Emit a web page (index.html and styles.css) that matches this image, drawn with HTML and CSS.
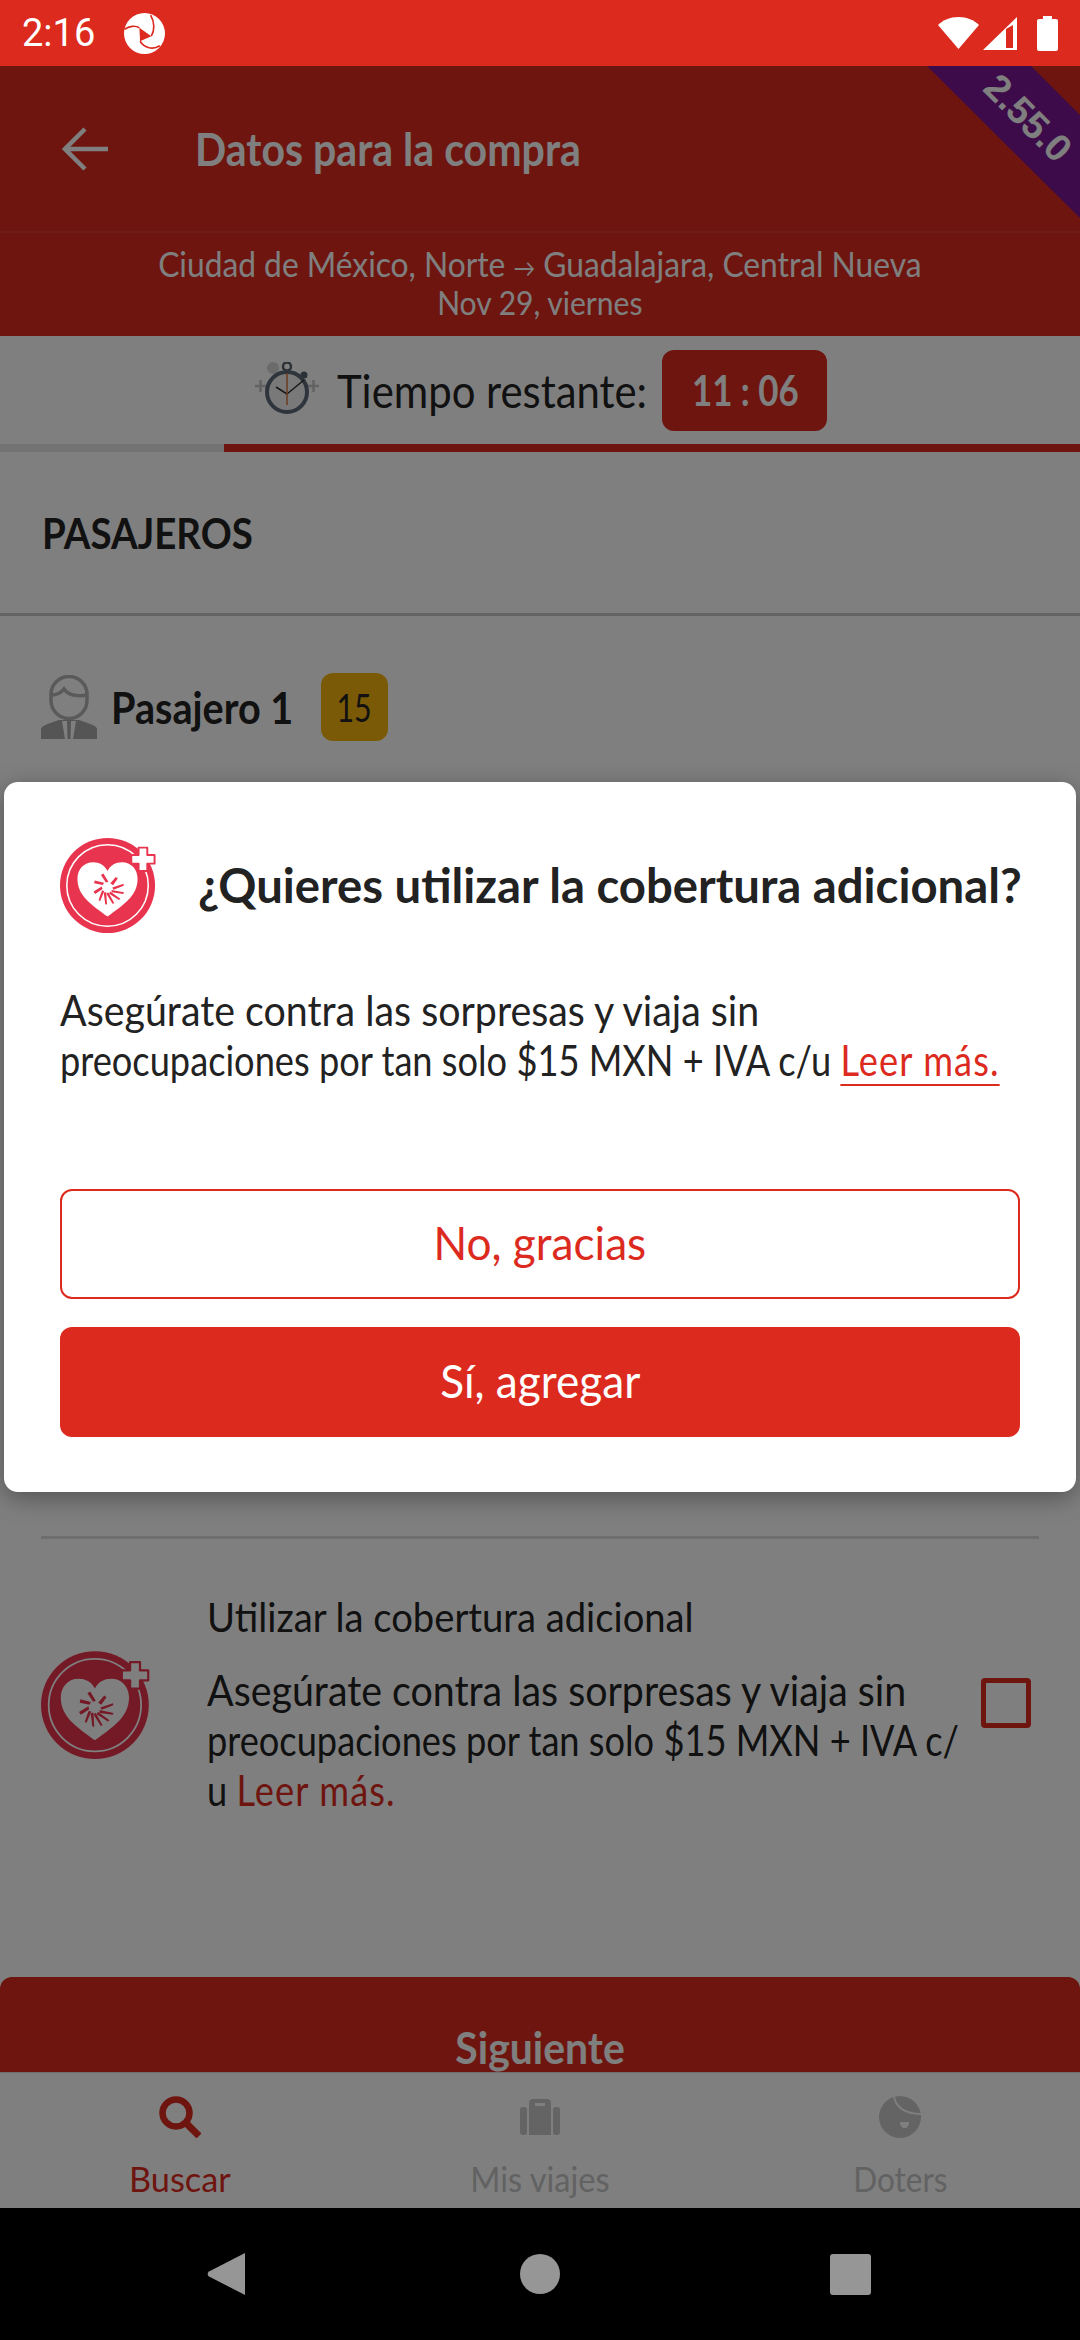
FILE: index.html
```html
<!DOCTYPE html>
<html lang="es">
<head>
<meta charset="utf-8">
<title>Datos para la compra</title>
<link rel="stylesheet" href="styles.css">
</head>
<body>
<div class="statusbar">
    <div class="status-left">
        <span class="clock">2:16</span>
        <svg width="41" height="41" viewBox="0 0 40 40">
            <circle cx="20" cy="20" r="20" fill="#fff"/>
            <path d="M15 14.4l11.6 8.2-10.9 5z" fill="#dc2a1e"/>
            <path d="M15 14.4C11 12 5 12.5 .5 16M26.600 22.600C30 17 30 9 26 2M15.700 27.600C19 33 27 37 35 32" fill="none" stroke="#dc2a1e" stroke-width="1.600"/>
        </svg>
    </div>
    <div class="status-right">
        <svg width="41" height="32" viewBox="0 0 41 32"><path d="M0 8C5 3 12 0 20.500 0S36 3 41 8L20.500 32z" fill="#fff"/></svg>
        <svg width="34" height="33" viewBox="0 0 34 33"><path d="M34 0v33H0zM23 12v19h7V8z" fill="#fff" fill-rule="evenodd"/></svg>
        <svg class="battery" width="21" height="35" viewBox="0 0 21 35"><path d="M6 0h9v3h4a2 2 0 0 1 2 2v28a2 2 0 0 1-2 2H2a2 2 0 0 1-2-2V5a2 2 0 0 1 2-2h4z" fill="#fff"/></svg>
    </div>
</div>

<div class="screen">
    <header class="appbar">
        <svg class="back" width="46" height="44" viewBox="0 0 46 44"><path d="M23 2L3 22l20 20M4 22h42" fill="none" stroke="#fff" stroke-width="4.500"/></svg>
        <h1>Datos para la compra</h1>
    </header>
    <div class="route">
        <p><span class="route-a">Ciudad de México, Norte <span class="arrow">→</span> Guadalajara, Central Nueva</span></p>
        <p><span class="route-b">Nov 29, viernes</span></p>
    </div>
    <div class="timer">
        <svg class="watch" width="64" height="56" viewBox="0 0 64 56">
            <path d="M0 24h11M5.500 18v12M53 24h11M58.500 18v12" stroke="#c4c4c4" stroke-width="2.500"/>
            <circle cx="18" cy="6" r="6" fill="#d6d6d6"/>
            <circle cx="32" cy="4.500" r="4" fill="none" stroke="#59636f" stroke-width="2.500"/>
            <circle cx="49" cy="13" r="3.500" fill="#59636f"/>
            <circle cx="32" cy="30" r="20" fill="#f2f2f2" stroke="#5f6b79" stroke-width="4"/>
            <path d="M32 32l-11-7M32 32l17-14" stroke="#333" stroke-width="1.500" fill="none"/>
            <path d="M32 11v32" stroke="#d9743c" stroke-width="1.500"/>
        </svg>
        <span class="timer-label">Tiempo restante:</span>
        <span class="timer-count"><span>11 : 06</span></span>
    </div>
    <div class="progress"><div class="progress-fill"></div></div>

    <section class="section-title"><span>PASAJEROS</span></section>

    <div class="passenger">
        <svg class="person" width="56" height="64" viewBox="0 0 56 64">
            <rect x="10" y="1.500" width="36" height="42" rx="18" fill="none" stroke="#b4b4b4" stroke-width="3.500"/>
            <path d="M10 20c6 0 10-2 13-6 4 6 13 8 23 6" fill="none" stroke="#b4b4b4" stroke-width="3.500"/>
            <path d="M0 64V54c0-3 6-5 18-9h20c12 4 18 6 18 9v10z" fill="#aaa"/>
            <path d="M21 46h5l.5 18H24zM35 46h-5l-.5 18H32z" fill="#fff"/>
        </svg>
        <span class="passenger-name">Pasajero 1</span>
        <span class="age"><span>15</span></span>
    </div>

    <div class="coverage">
        <svg class="shield shield-row" viewBox="0 0 100 100"><use href="#heart-logo"/></svg>
        <div class="coverage-text">
            <p class="coverage-title">Utilizar la cobertura adicional</p>
            <p class="line line-a">Asegúrate contra las sorpresas y viaja sin</p>
            <p class="line line-b">preocupaciones por tan solo $15 MXN + IVA c/</p>
            <p class="line line-c">u <span class="red">Leer más.</span></p>
        </div>
        <div class="checkbox"></div>
    </div>

    <div class="next"><span>Siguiente</span></div>

    <nav class="tabs">
        <div class="tab tab-active">
            <svg width="42" height="42" viewBox="0 0 42 42"><circle cx="17" cy="17" r="13.500" fill="none" stroke="#dc2a1e" stroke-width="6.500"/><path d="M26 26l14 14" stroke="#dc2a1e" stroke-width="7"/></svg>
            <span class="tab-label label-buscar">Buscar</span>
        </div>
        <div class="tab">
            <svg width="42" height="42" viewBox="0 0 42 42"><g fill="#c8c8c8"><rect x="1" y="11" width="7" height="28" rx="3"/><rect x="34" y="11" width="7" height="28" rx="3"/><path d="M10 39V7a4 4 0 0 1 4-4h14a4 4 0 0 1 4 4v32z"/></g><rect x="16" y="7" width="10" height="3" fill="#fff"/></svg>
            <span class="tab-label label-viajes">Mis viajes</span>
        </div>
        <div class="tab">
            <svg width="42" height="42" viewBox="0 0 42 42"><circle cx="21" cy="21" r="21" fill="#c8c8c8"/><path d="M15 0c1 10 10 18 27 18" fill="none" stroke="#fff" stroke-width="2"/><path d="M21 26h9c0 4-2 6-4.500 6S21 30 21 26z" fill="#fff"/></svg>
            <span class="tab-label label-doters">Doters</span>
        </div>
    </nav>

    <div class="ribbon"><span>2.55.0</span></div>
    <div class="scrim"></div>

    <div class="dialog">
        <div class="dialog-head">
            <svg class="shield" viewBox="0 0 100 100"><use href="#heart-logo"/></svg>
            <h2>¿Quieres utilizar la cobertura adicional?</h2>
        </div>
        <div class="dialog-body">
            <p class="line line-a">Asegúrate contra las sorpresas y viaja sin</p>
            <p class="line line-b">preocupaciones por tan solo $15 MXN + IVA c/u <a class="more">Leer más.</a></p>
        </div>
        <div class="btn btn-outline"><span>No, gracias</span></div>
        <div class="btn btn-solid"><span>Sí, agregar</span></div>
    </div>
</div>

<div class="navbar">
    <svg class="nav-back" width="38" height="44" viewBox="0 0 38 44"><path d="M38 1v42L2 24.500a3 3 0 0 1 0-5z" fill="#969696"/></svg>
    <svg class="nav-home" width="40" height="40" viewBox="0 0 40 40"><circle cx="20" cy="20" r="20" fill="#969696"/></svg>
    <svg class="nav-recent" width="41" height="41" viewBox="0 0 41 41"><rect width="41" height="41" rx="3" fill="#969696"/></svg>
</div>

<svg class="defs" width="0" height="0">
    <symbol id="heart-logo" viewBox="0 0 100 100">
        <circle cx="49" cy="51" r="49" fill="#e8344e"/>
        <circle cx="49" cy="51" r="42" fill="none" stroke="#fff" stroke-width="1.600"/>
        <path d="M49 83C33 71 18 62 18 44c0-10 7-17 16-17 7 0 12 3 15 9 3-6 8-9 15-9 9 0 16 7 16 17 0 18-15 27-31 39z" fill="#fff"/>
        <path d="M81 12h9v7.500h7.500v9H90V36h-9v-7.500h-7.500v-9H81z" fill="#fff" stroke="#e8344e" stroke-width="2" stroke-linejoin="round"/>
        <g fill="#e8344e" transform="translate(49 53) scale(.85)">
            <path d="M-2-6l-6-9 3-2 6 10z"/>
            <path d="M-2-6l-6-9 3-2 6 10z" transform="rotate(-45)"/>
            <path d="M-2-6l-6-9 3-2 6 10z" transform="rotate(-90)"/>
            <path d="M0-6l1-10 3 0 0 10z" transform="rotate(35)"/>
            <path d="M3-5l3-14 2 1-2 13z" transform="rotate(60)"/>
            <path d="M3-5l3-15 2 1-2 14z" transform="rotate(90)"/>
            <path d="M3-5l3-15 2 1-2 14z" transform="rotate(115)"/>
            <path d="M3-5l3-15 2 1-2 14z" transform="rotate(140)"/>
            <path d="M3-5l3-15 2 1-2 14z" transform="rotate(165)"/>
            <path d="M3-5l3-13 2 1-2 12z" transform="rotate(190)"/>
        </g>
    </symbol>
</svg>
</body>
</html>
```

FILE: styles.css
```css
html, body {
    margin: 0;
    padding: 0;
}

body {
    width: 1080px;
    height: 2340px;
    overflow: hidden;
    background: #fff;
    color: #222;
    font-family: Lato, "Liberation Sans", sans-serif;
    display: flex;
    flex-direction: column;
}

h1, h2, p {
    margin: 0;
    font-weight: normal;
}

svg {
    display: block;
    flex: none;
}

/* la letra original es mas estrecha que Lato: se comprime cada texto */
h1, h2, .route-a, .route-b, .timer-label, .timer-count span, .section-title span,
.passenger-name, .age span, .line, .coverage-title, .next span, .tab-label, .btn span {
    display: inline-block;
    white-space: nowrap;
    transform-origin: left center;
}

.statusbar {
    height: 66px;
    background: #dc2a1e;
    display: flex;
    justify-content: space-between;
    align-items: center;
    padding: 0 22px;
    box-sizing: border-box;
    flex: none;
}

.status-left, .status-right {
    display: flex;
    align-items: center;
}

.status-right {
    gap: 4px;
}

.battery {
    margin-left: 16px;
}

.clock {
    color: #fff;
    font: 38px Roboto, sans-serif;
    margin-right: 29px;
}

.screen {
    position: relative;
    height: 2142px;
    flex: none;
    display: flex;
    flex-direction: column;
    overflow: hidden;
}

.appbar {
    height: 165px;
    background: #dc2a1e;
    display: flex;
    align-items: center;
    padding-left: 62px;
    box-sizing: border-box;
    flex: none;
}

.back {
    margin-right: 87px;
}

.appbar h1 {
    color: #fff;
    font-size: 46px;
    font-weight: 700;
    transform: scaleX(.893);
}

.route {
    height: 105px;
    background: #dc2a1e;
    border-top: 2px solid #e33a2e;
    box-sizing: border-box;
    color: #fff;
    text-align: center;
    line-height: 39px;
    padding-top: 11px;
    flex: none;
}

.route p {
    height: 39px;
}

.route-a {
    font-size: 35px;
    transform-origin: center;
    transform: scaleX(.907);
}

.route-b {
    font-size: 33px;
    transform-origin: center;
    transform: scaleX(.91);
}

.arrow {
    font-size: 24px;
}

.timer {
    height: 108px;
    display: flex;
    align-items: center;
    justify-content: center;
    padding-left: 2px;
    flex: none;
}

.watch {
    margin-right: 18px;
}

.timer-label {
    font-size: 46px;
    margin-right: -15px;
    transform: scaleX(.91);
}

.timer-count {
    width: 165px;
    height: 81px;
    border-radius: 12px;
    background: #dc2a1e;
    color: #fff;
    font-size: 42px;
    font-weight: 700;
    display: flex;
    align-items: center;
    justify-content: center;
}

.timer-count span {
    transform-origin: center;
    transform: scaleX(.83);
}

.progress {
    height: 8px;
    background: #e6e6e6;
    flex: none;
}

.progress-fill {
    height: 8px;
    margin-left: 224px;
    background: #dc2a1e;
}

.section-title {
    height: 164px;
    padding-left: 42px;
    display: flex;
    align-items: center;
    font-size: 42px;
    font-weight: 700;
    border-bottom: 3px solid #c8c8c8;
    box-sizing: border-box;
    flex: none;
}

.section-title span {
    transform: scaleX(.915);
}

.passenger {
    height: 182px;
    display: flex;
    align-items: center;
    padding-left: 41px;
    flex: none;
}

.person {
    margin-right: 14px;
}

.passenger-name {
    font-size: 44px;
    font-weight: 700;
    margin-right: 7px;
    transform: scaleX(.9);
}

.age {
    width: 67px;
    height: 68px;
    border-radius: 12px;
    background: #f5b50e;
    font-size: 38px;
    display: flex;
    align-items: center;
    justify-content: center;
}

.age span {
    transform-origin: center;
    transform: scaleX(.8);
}

.coverage {
    margin: 738px 41px 0;
    padding-top: 56px;
    height: 441px;
    box-sizing: border-box;
    border-top: 3px solid #ddd;
    display: flex;
    align-items: flex-start;
    flex: none;
}

.shield {
    width: 97px;
    height: 97px;
    overflow: visible;
}

.shield-row {
    width: 110px;
    height: 110px;
    margin: 54px 56px 0 0;
}

.coverage-text {
    width: 762px;
    flex: none;
}

.coverage-title {
    display: block;
    font-size: 40px;
    line-height: 44px;
    margin-bottom: 26px;
    transform: scaleX(.955);
}

.line {
    display: block;
    font-size: 42px;
    line-height: 50px;
}

.line-a {
    transform: scaleX(.937);
}

.line-b, .line-c {
    transform: scaleX(.862);
}

.red {
    color: #dc2a1e;
    letter-spacing: 1.300px;
}

.checkbox {
    width: 50px;
    height: 50px;
    box-sizing: border-box;
    border: 5px solid #dc2a1e;
    border-radius: 4px;
    margin: 83px 0 0 12px;
    flex: none;
}

.next {
    height: 95px;
    background: #dc2a1e;
    border-radius: 12px 12px 0 0;
    color: #fff;
    font-size: 44px;
    font-weight: 700;
    text-align: center;
    line-height: 140px;
    overflow: hidden;
    flex: none;
}

.next span {
    transform-origin: center;
    transform: scaleX(.93);
}

.tabs {
    height: 136px;
    background: #fff;
    border-top: 1px solid #ddd;
    box-sizing: border-box;
    display: flex;
    flex: none;
}

.tab {
    flex: 1;
    display: flex;
    flex-direction: column;
    align-items: center;
    padding-top: 23px;
    color: #c4c4c4;
    font-size: 35px;
    line-height: 40px;
    gap: 20px;
}

.tab-label {
    transform-origin: center;
}

.label-buscar {
    transform: scaleX(.98);
}

.label-viajes {
    transform: scaleX(.93);
}

.label-doters {
    transform: scaleX(.9);
}

.tab-active {
    color: #dc2a1e;
}

.ribbon {
    position: absolute;
    top: 0;
    right: 0;
    width: 153px;
    height: 153px;
    background: #7a1494;
    clip-path: polygon(0 0, 104px 0, 153px 49px, 153px 152px);
}

.ribbon span {
    position: absolute;
    left: 41px;
    top: 30px;
    width: 120px;
    text-align: center;
    color: #fff;
    font: bold 38px/44px "Liberation Sans", sans-serif;
    transform: rotate(45deg);
}

.scrim {
    position: absolute;
    inset: 0;
    background: rgba(0, 0, 0, 0.5);
}

.dialog {
    position: absolute;
    left: 4px;
    top: 716px;
    width: 1072px;
    height: 710px;
    box-sizing: border-box;
    padding: 54px 56px 0;
    background: #fff;
    border-radius: 14px;
    box-shadow: 0 6px 24px rgba(0, 0, 0, 0.35);
}

.dialog-head {
    display: flex;
    align-items: center;
    height: 96px;
    gap: 41px;
}

.dialog-head h2 {
    font-size: 48px;
    font-weight: 700;
    transform: scaleX(.985);
}

.dialog-body {
    margin-top: 53px;
    height: 204px;
}

.more {
    color: #dc2a1e;
    letter-spacing: 1.300px;
    text-decoration: underline;
    text-decoration-thickness: 2px;
    text-underline-offset: 8px;
}

.btn {
    height: 110px;
    box-sizing: border-box;
    border-radius: 12px;
    display: flex;
    align-items: center;
    justify-content: center;
    font-size: 46px;
    padding-bottom: 4px;
}

.btn span {
    transform-origin: center;
    transform: scaleX(.96);
}

.btn-outline {
    color: #dc2a1e;
    border: 2px solid #dc2a1e;
    margin-bottom: 28px;
}

.btn-solid {
    color: #fff;
    background: #dc2a1e;
}

.navbar {
    height: 132px;
    background: #000;
    display: flex;
    align-items: center;
    padding-left: 207px;
    flex: none;
}

.nav-home {
    margin-left: 275px;
}

.nav-recent {
    margin-left: 270px;
}

.defs {
    position: absolute;
}
```
